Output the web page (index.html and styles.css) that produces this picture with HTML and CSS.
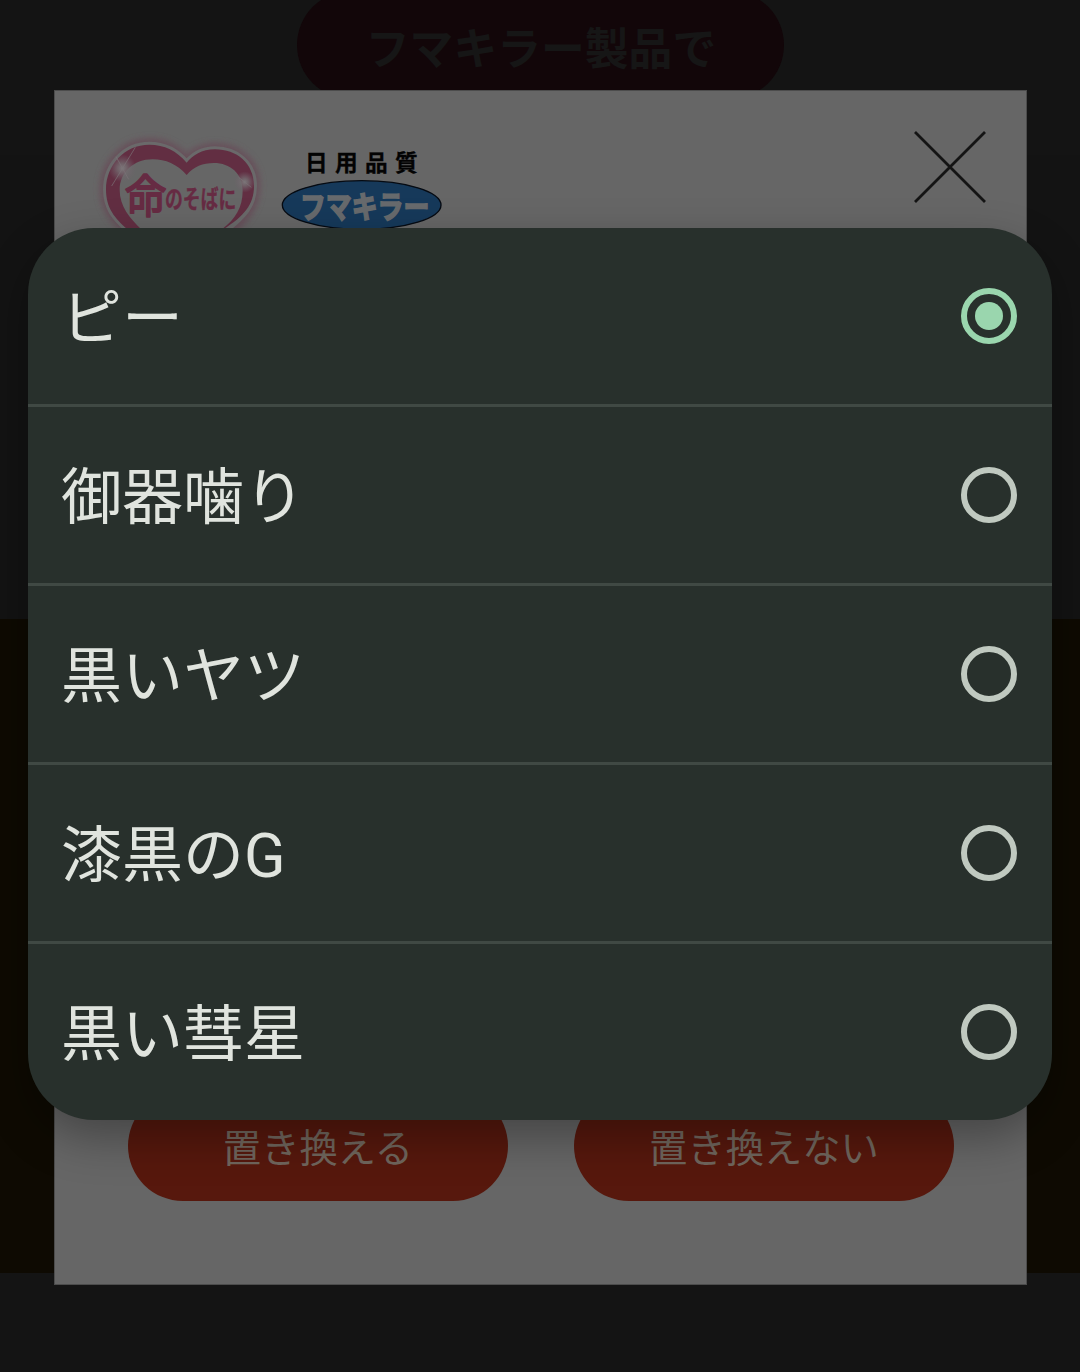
FILE: index.html
```html
<!DOCTYPE html>
<html lang="ja">
<head>
  <meta charset="UTF-8">
  <title>フマキラー</title>
  <link rel="stylesheet" href="styles.css">
</head>
<body>

  <div class="page">
    <header class="hero">
      <div class="hero-pill">フマキラー製品で</div>
    </header>
    <section class="band-dark"></section>
    <section class="band-brown"></section>
    <section class="band-bottom"></section>
  </div>

  <div class="modal">
    <div class="modal-head">
      <svg class="logo" viewBox="0 0 1140 420">
        <defs>
          <filter id="glow" x="-20%" y="-20%" width="140%" height="140%">
            <feGaussianBlur stdDeviation="9"/>
          </filter>
          <radialGradient id="spark">
            <stop offset="0" stop-color="#7c777a"/>
            <stop offset="0.35" stop-color="#736c70" stop-opacity="0.8"/>
            <stop offset="1" stop-color="#70606a" stop-opacity="0"/>
          </radialGradient>
        </defs>
        <!-- heart -->
        <path class="heart-glow" filter="url(#glow)" d="M320 158C290 122 253 104 208 104C133 104 78 166 78 238C78 306 120 340 182 385L320 450L430 375C485 330 522 290 522 228C522 160 470 118 405 118C365 118 338 137 320 158Z"/>
        <path class="heart-edge" d="M320 158C290 122 253 104 208 104C133 104 78 166 78 238C78 296 105 325 142 358L320 450L440 358C490 320 522 285 522 228C522 160 470 118 405 118C365 118 338 137 320 158Z"/>
        <path class="heart" d="M320 158C290 122 253 104 208 104C133 104 78 166 78 238C78 296 105 325 142 358L320 450L430 358C490 320 522 285 522 228C522 160 470 118 405 118C365 118 338 137 320 158Z"/>
        <path class="heart-inner" d="M320 195C290 162 258 148 218 148C160 148 119 188 119 240C119 290 150 325 182 356L250 420H360L428 356C465 328 488 292 488 242C488 190 450 159 402 159C368 159 342 170 320 195Z"/>
        <circle cx="127" cy="175" r="42" fill="url(#spark)"/>
        <circle cx="494" cy="216" r="32" fill="url(#spark)"/>
        <path class="ray" d="M95 228L166 112M108 140L146 208M476 202L514 232"/>
        <text class="logo-life" x="136" y="310" textLength="122" lengthAdjust="spacingAndGlyphs">命</text>
        <text class="logo-near" x="255" y="294" textLength="214" lengthAdjust="spacingAndGlyphs">のそばに</text>
        <!-- brand oval -->
        <text class="logo-quality" x="675" y="184">日用品質</text>
        <ellipse class="oval" cx="845" cy="285" rx="238" ry="73"/>
        <text class="logo-brand" x="660" y="323" textLength="388" lengthAdjust="spacingAndGlyphs">フマキラー</text>
      </svg>
      <svg class="close" viewBox="0 0 72 72">
        <path d="M1 1L71 71M71 1L1 71"/>
      </svg>
    </div>
    <div class="modal-buttons">
      <div class="btn">置き換える</div>
      <div class="btn">置き換えない</div>
    </div>
  </div>

  <div class="select-list">
    <label class="option"><span class="name">ピー</span><span class="radio checked"></span></label>
    <label class="option"><span class="name">御器噛り</span><span class="radio"></span></label>
    <label class="option"><span class="name">黒いヤツ</span><span class="radio"></span></label>
    <label class="option"><span class="name">漆黒のG</span><span class="radio"></span></label>
    <label class="option"><span class="name">黒い彗星</span><span class="radio"></span></label>
  </div>

</body>
</html>
```

FILE: styles.css
```css
* {
  box-sizing: border-box;
}
body {
  margin: 0;
  height: 1372px;
  overflow: hidden;
  position: relative;
  background: #141414;
  font-family: Roboto, "Noto Sans CJK JP", sans-serif;
}

/* page behind */
.page {
  display: grid;
  grid-template-rows: 155px 464px 654px 99px;
}
.hero {
  display: flex;
  justify-content: center;
  align-items: flex-start;
  background: #141414;
}
.hero-pill {
  width: 487px;
  height: 108px;
  margin-top: -9px;
  padding-left: 2px;
  border-radius: 54px;
  background: #120609;
  color: #161616;
  font-size: 43.8px;
  font-weight: 700;
  line-height: 119px;
  text-align: center;
}
.band-dark {
  background: #131313;
}
.band-brown {
  background: #0e0a02;
}
.band-bottom {
  background: #141414;
}

/* modal */
.modal {
  position: absolute;
  left: 54px;
  top: 90px;
  width: 973px;
  height: 1195px;
  display: flex;
  flex-direction: column;
  justify-content: space-between;
  border: 1px solid #4c4c4c;
  background: #666;
}
.modal-head {
  display: flex;
  justify-content: space-between;
  padding: 19px 40px 0 25px;
}
.logo {
  width: 380px;
  height: 140px;
}
.close {
  width: 72px;
  height: 72px;
  margin-top: 21px;
  stroke: #141414;
  stroke-width: 2.8;
}
.modal-buttons {
  display: flex;
  gap: 66px;
  padding: 0 72px 83px 73px;
}
.btn {
  flex: 1;
  height: 110px;
  border-radius: 55px;
  background: #57180d;
  color: #70665d;
  font-size: 38.3px;
  line-height: 115px;
  text-align: center;
}

/* logo parts */
.heart-glow {
  fill: #67505a;
  stroke: #67505a;
  stroke-width: 38;
}
.heart-edge {
  fill: #6a696a;
  stroke: #6a696a;
  stroke-width: 18;
}
.heart {
  fill: #622e42;
}
.heart-inner {
  fill: #666;
}
.ray {
  fill: none;
  stroke: #7b7277;
  stroke-width: 2;
}
.logo-life,
.logo-near {
  fill: #662b43;
  stroke: #662b43;
  stroke-linejoin: round;
}
.logo-life {
  font-size: 136px;
  font-weight: 400;
  stroke-width: 6;
}
.logo-near {
  font-size: 74px;
  font-weight: 700;
  stroke-width: 1;
}
.logo-quality {
  fill: #030303;
  stroke: #030303;
  stroke-width: 1;
  font-size: 68px;
  font-weight: 700;
  letter-spacing: 22px;
}
.oval {
  fill: #16395a;
  stroke: #050a12;
  stroke-width: 4;
}
.logo-brand {
  fill: #676a6d;
  stroke: #676a6d;
  stroke-width: 5;
  font-size: 92px;
  font-weight: 700;
}

/* native select popup */
.select-list {
  position: absolute;
  left: 28px;
  top: 228px;
  width: 1024px;
  border-radius: 66px;
  background: #28302c;
  box-shadow: 0 18px 46px rgba(0, 0, 0, 0.32);
}
.option {
  display: flex;
  justify-content: space-between;
  align-items: center;
  height: 176px;
  padding: 0 35px 0 33px;
  color: #e0e4de;
  font-size: 61px;
}
.option + .option {
  height: 179px;
  border-top: 3px solid #404944;
}
.name {
  padding-bottom: 6px;
}
.radio {
  display: flex;
  justify-content: center;
  align-items: center;
  width: 56px;
  height: 56px;
  border: 6px solid #c0c9c0;
  border-radius: 50%;
}
.radio.checked {
  border-color: #9ad6ae;
}
.radio.checked::after {
  content: "";
  width: 28px;
  height: 28px;
  border-radius: 50%;
  background: #9ad6ae;
}
```
